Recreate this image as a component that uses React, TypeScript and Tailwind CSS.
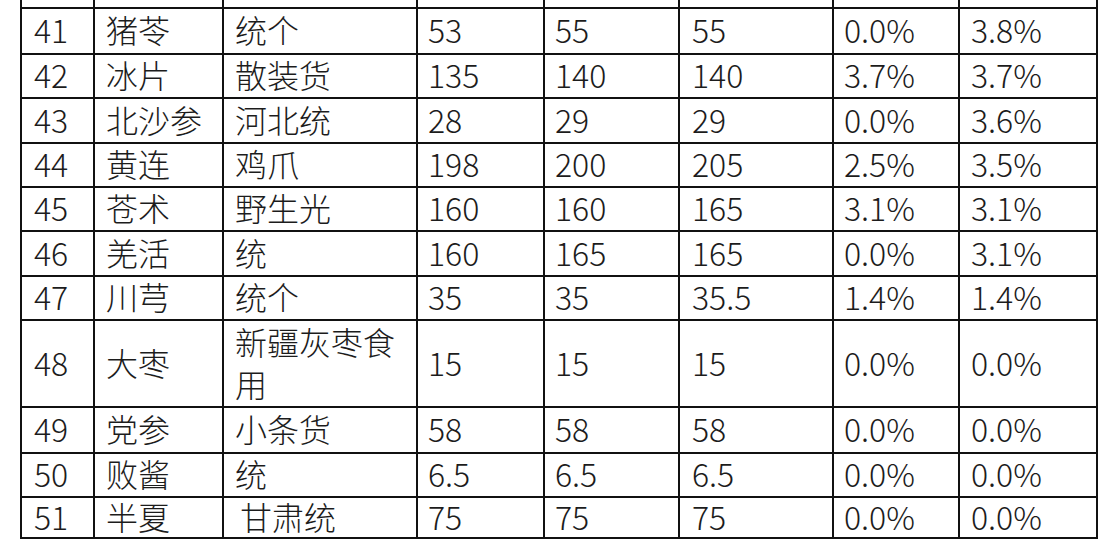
import React from "react";

type Row = { h: string; cells: string[] };

const rows: Row[] = [
  { h: "h-[46px]", cells: ["41", "猪苓", "统个", "53", "55", "55", "0.0%", "3.8%"] },
  { h: "h-[44px]", cells: ["42", "冰片", "散装货", "135", "140", "140", "3.7%", "3.7%"] },
  { h: "h-[45px]", cells: ["43", "北沙参", "河北统", "28", "29", "29", "0.0%", "3.6%"] },
  { h: "h-[44px]", cells: ["44", "黄连", "鸡爪", "198", "200", "205", "2.5%", "3.5%"] },
  { h: "h-[44px]", cells: ["45", "苍术", "野生光", "160", "160", "165", "3.1%", "3.1%"] },
  { h: "h-[45px]", cells: ["46", "羌活", "统", "160", "165", "165", "0.0%", "3.1%"] },
  { h: "h-[44px]", cells: ["47", "川芎", "统个", "35", "35", "35.5", "1.4%", "1.4%"] },
  { h: "h-[87px]", cells: ["48", "大枣", "新疆灰枣食用", "15", "15", "15", "0.0%", "0.0%"] },
  { h: "h-[46px]", cells: ["49", "党参", "小条货", "58", "58", "58", "0.0%", "0.0%"] },
  { h: "h-[44px]", cells: ["50", "败酱", "统", "6.5", "6.5", "6.5", "0.0%", "0.0%"] },
  { h: "h-[41px]", cells: ["51", "半夏", "甘肃统", "75", "75", "75", "0.0%", "0.0%"] },
];

const colW = [
  "w-[73px]",
  "w-[129px]",
  "w-[194px]",
  "w-[127px]",
  "w-[135px]",
  "w-[154px]",
  "w-[126px]",
  "w-[138px]",
];

const colPad = [
  "pl-[12px]",
  "pl-[11px]",
  "pl-[11px]",
  "pl-[10px]",
  "pl-[10px]",
  "pl-[12px]",
  "pl-[10px]",
  "pl-[11px]",
];

export default function App() {
  return (
    <div
      className="w-[1100px] h-[552px] overflow-hidden bg-white pl-[20px] text-[#1c1c1c] font-light"
      style={{ fontFamily: '"Noto Sans CJK SC", "Noto Sans", sans-serif' }}
    >
      <div className="flex flex-col w-[1078px] border-l-2 border-[#111]">
        <div className="flex h-[9px]">
          {colW.map((w, i) => (
            <div key={i} className={`${w} h-full border-r-2 border-b-2 border-[#111]`} />
          ))}
        </div>
        {rows.map((r, ri) => (
          <div key={ri} className={`flex ${r.h}`}>
            {r.cells.map((c, ci) => (
              <div
                key={ci}
                className={`${colW[ci]} ${
                  ri === 10 && ci === 2 ? "pl-[16px]" : colPad[ci]
                } h-full border-r-2 border-b-2 border-[#111] flex items-center pb-[4px] text-[32px] leading-[42px] break-all`}
              >
                <span className="block">{c}</span>
              </div>
            ))}
          </div>
        ))}
      </div>
    </div>
  );
}
